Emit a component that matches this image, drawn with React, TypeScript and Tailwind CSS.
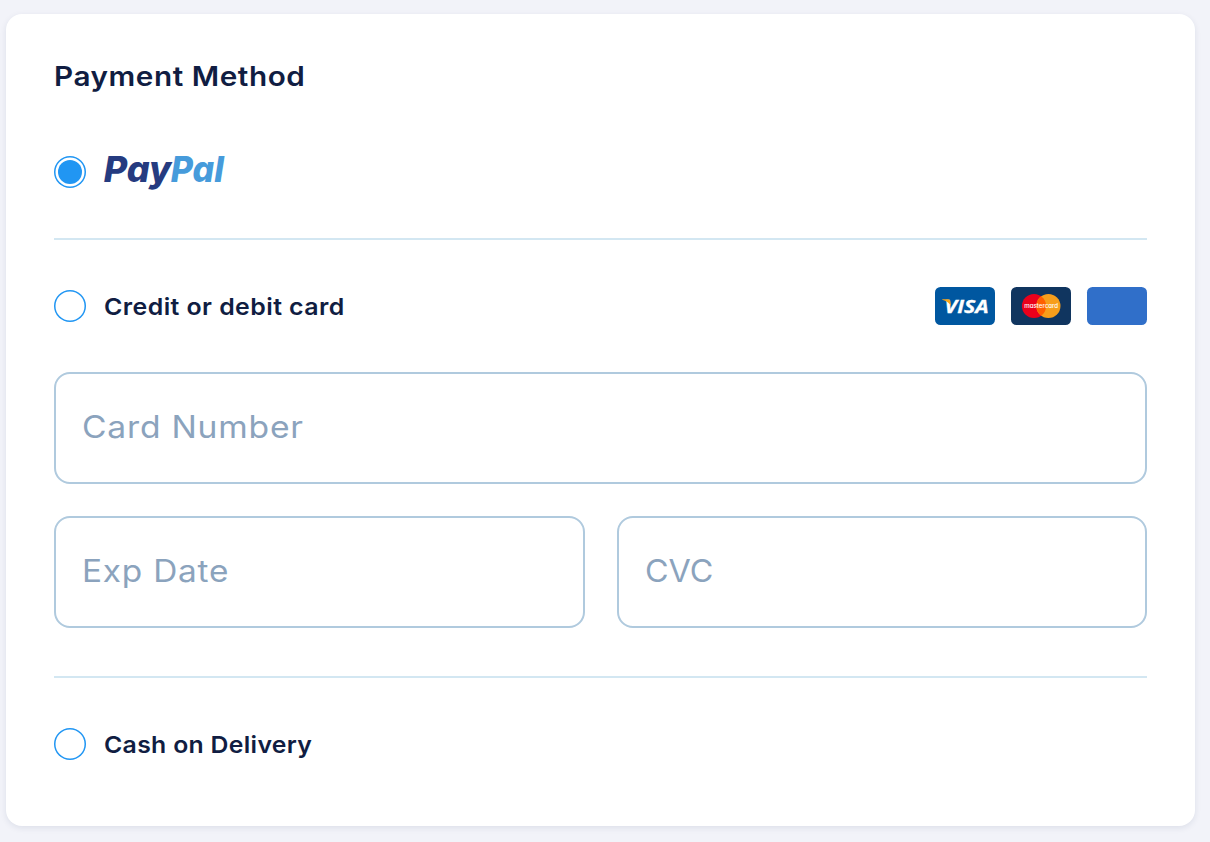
import { useState } from 'react';

type Method = 'paypal' | 'card' | 'cash';

function Radio({ value, selected, onSelect, label }: { value: Method; selected: Method; onSelect: (m: Method) => void; label: string }) {
  return (
    <input
      type="radio"
      name="payment-method"
      aria-label={label}
      checked={selected === value}
      onChange={() => onSelect(value)}
      className="m-0 h-8 w-8 shrink-0 appearance-none rounded-full bg-white bg-clip-content p-1 shadow-[inset_0_0_0_1.5px_#2196f3] checked:bg-[#2196f3]"
    />
  );
}

function PayPalLogo() {
  return (
    <svg width="122" height="36" viewBox="0 0 122 36" className="ml-[17px] overflow-visible font-['Inter',sans-serif] text-[35.5px] font-extrabold italic [font-feature-settings:'cv11']">
      <text x="0.8" y="28" textLength="67.5" lengthAdjust="spacingAndGlyphs" fill="#253b80">Pay</text>
      <text x="67.8" y="28" textLength="53" lengthAdjust="spacingAndGlyphs" fill="#469bdb">Pal</text>
    </svg>
  );
}

function VisaCard() {
  return (
    <svg width="60" height="38" viewBox="0 0 60 38" className="font-['Open_Sans',sans-serif] text-[18.5px] font-bold italic">
      <rect width="60" height="38" rx="5.5" fill="#0057a0" />
      <text x="9.6" y="25.5" textLength="44" lengthAdjust="spacingAndGlyphs" fill="#fff" stroke="#fff" strokeWidth="0.3">VISA</text>
      <path d="M7.2 12.2H13.2Q14.9 12.2 15.2 13.8L16.2 19.4Q13.6 14.4 7.2 12.8Z" fill="#faa61a" />
    </svg>
  );
}

function MastercardCard() {
  return (
    <svg width="60" height="38" viewBox="0 0 60 38" className="font-['Inter',sans-serif] text-[6px] font-medium [font-feature-settings:'cv11']">
      <rect width="60" height="38" rx="5.5" fill="#10355f" />
      <circle cx="23" cy="19" r="12.1" fill="#eb001b" />
      <circle cx="37.4" cy="19" r="12.1" fill="#f79e1b" />
      <path d="M30.2 9.27a12.1 12.1 0 0 1 0 19.46a12.1 12.1 0 0 1 0-19.46Z" fill="#ff5f00" />
      <text x="13.2" y="20.8" textLength="34" lengthAdjust="spacingAndGlyphs" fill="#fff">mastercard</text>
    </svg>
  );
}

function Field({ label, textClass }: { label: string; textClass: string }) {
  const [text, setText] = useState('');
  return (
    <label className="relative block h-28 rounded-2xl border-2 border-[#b0cade] bg-white">
      <input
        value={text}
        onChange={(e) => setText(e.target.value)}
        className="h-full w-full rounded-2xl bg-transparent px-[26px] pb-1 text-[30.5px] outline-none"
      />
      {text === '' && (
        <span className={"pointer-events-none absolute top-[30px] left-[26px] origin-left text-[30.5px] leading-[46px] whitespace-nowrap text-[#8ba3bd] " + textClass}>{label}</span>
      )}
    </label>
  );
}

const option = "ml-[18px] pt-0.5 text-[23.5px] leading-8 font-semibold";

export default function App() {
  const [method, setMethod] = useState<Method>('paypal');
  return (
    <main className="h-[842px] bg-[#f2f3f9] pt-3.5 pr-[15px] pl-1.5 font-['Inter',sans-serif] text-[#101d42]">
      <section className="h-[812px] rounded-2xl bg-white px-12 pt-[42px] shadow-[0_2px_6px_#17275018]">
        <h1 className="h-10 text-[27px] leading-[41px] font-semibold">
          <span className="inline-block origin-left scale-x-[1.1] tracking-[0.5px]">Payment Method</span>
        </h1>
        <div className="mt-[60px] flex h-8 items-center">
          <Radio value="paypal" selected={method} onSelect={setMethod} label="PayPal" />
          <PayPalLogo />
        </div>
        <hr className="mt-[50px] border-0 border-t-2 border-[#d3e7f2]" />
        <div className="mt-[47px] flex h-[38px] items-center">
          <Radio value="card" selected={method} onSelect={setMethod} label="Credit or debit card" />
          <span className={option}><span className="inline-block origin-left scale-x-[1.06] tracking-[0.4px]">Credit or debit card</span></span>
          <div className="ml-auto flex gap-4">
            <VisaCard />
            <MastercardCard />
            <div className="h-[38px] w-[60px] rounded-[5.5px] bg-[#306fc9]" />
          </div>
        </div>
        <div className="mt-[47px] grid grid-cols-2 gap-8">
          <div className="col-span-2">
            <Field label="Card Number" textClass="scale-x-[1.103] tracking-[0.7px]" />
          </div>
          <Field label="Exp Date" textClass="scale-x-[1.095] tracking-[0.7px]" />
          <Field label="CVC" textClass="scale-x-[1.06]" />
        </div>
        <hr className="mt-12 border-0 border-t-2 border-[#d3e7f2]" />
        <div className="mt-[50px] flex h-8 items-center">
          <Radio value="cash" selected={method} onSelect={setMethod} label="Cash on Delivery" />
          <span className={option}><span className="inline-block origin-left scale-x-[1.055] tracking-[0.3px]">Cash on Delivery</span></span>
        </div>
      </section>
    </main>
  );
}
